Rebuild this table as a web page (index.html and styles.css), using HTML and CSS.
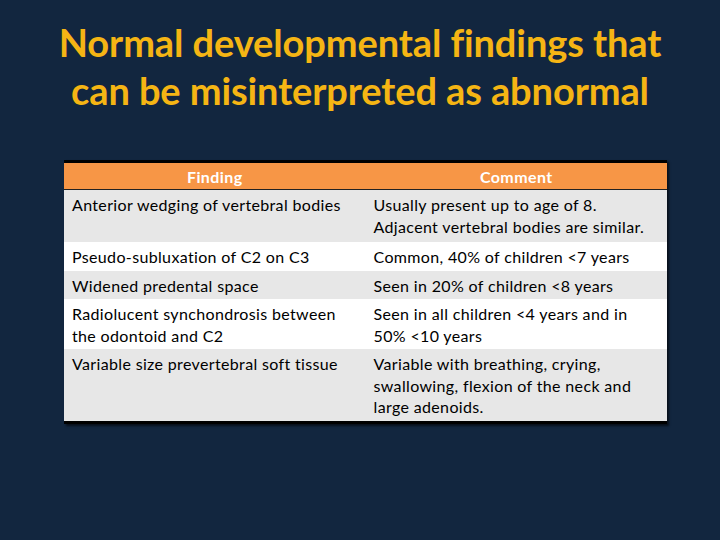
FILE: index.html
```html
<!DOCTYPE html>
<html>
<head>
<meta charset="utf-8">
<link rel="stylesheet" href="styles.css">
</head>
<body>
<div class="slide">
  <h1 class="title">Normal developmental findings that<br>can be misinterpreted as abnormal</h1>
  <table class="findings">
    <thead>
      <tr><th>Finding</th><th>Comment</th></tr>
    </thead>
    <tbody>
      <tr class="odd first"><td>Anterior wedging of vertebral bodies</td><td>Usually present up to age of 8.<br>Adjacent vertebral bodies are similar.</td></tr>
      <tr class="even"><td>Pseudo-subluxation of C2 on C3</td><td>Common, 40% of children &lt;7 years</td></tr>
      <tr class="odd"><td>Widened predental space</td><td>Seen in 20% of children &lt;8 years</td></tr>
      <tr class="even"><td>Radiolucent synchondrosis between<br>the odontoid and C2</td><td>Seen in all children &lt;4 years and in<br>50% &lt;10 years</td></tr>
      <tr class="odd"><td>Variable size prevertebral soft tissue</td><td>Variable with breathing, crying,<br>swallowing, flexion of the neck and<br>large adenoids.</td></tr>
    </tbody>
  </table>
</div>
</body>
</html>
```
FILE: styles.css
```css
html, body {
  margin: 0;
  padding: 0;
  background: #12263f;
}
.slide {
  width: 720px;
  height: 540px;
  background: #12263f;
  padding-top: 18px;
  box-sizing: border-box;
  font-family: Lato, "Liberation Sans", sans-serif;
}
.title {
  margin: 0;
  text-align: center;
  color: #f5b514;
  font-size: 38px;
  font-weight: bold;
  line-height: 48px;
  letter-spacing: -0.1px;
  white-space: nowrap;
}
.findings {
  margin: 46px 0 0 64px;
  width: 603px;
  border-collapse: collapse;
  table-layout: fixed;
  border-top: 3px solid #000;
  border-bottom: 3px solid #000;
  box-shadow: 2px 2px 2px rgba(0, 0, 0, 0.6);
  font-size: 16px;
  letter-spacing: 0.35px;
  color: #000;
}
.findings th {
  background: #f79646;
  color: #fff;
  font-weight: bold;
  font-size: 16px;
  letter-spacing: 0.4px;
  height: 26px;
  padding: 0;
  border-bottom: 1px solid #222;
  text-align: center;
}
.findings td {
  padding: 4px 6px 3px 8px;
  line-height: 21.5px;
  vertical-align: top;
  text-align: left;
  white-space: nowrap;
}
.findings tr.odd td {
  background: #e7e7e7;
}
.findings tr.even td {
  background: #ffffff;
}
.findings tr.first td {
  padding-bottom: 5px;
}
```
